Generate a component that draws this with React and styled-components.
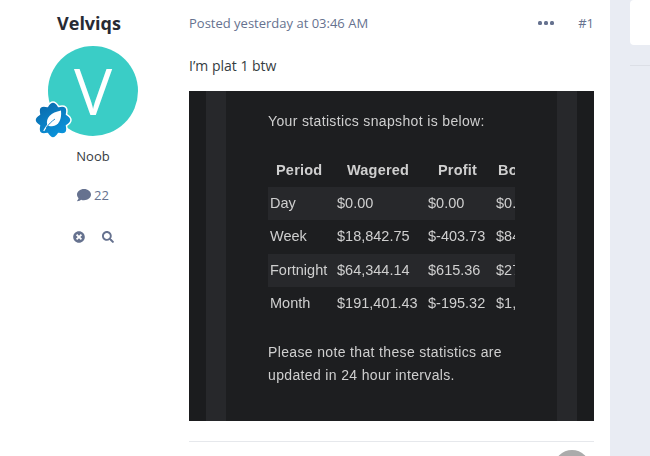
import React from 'react'
import styled, { createGlobalStyle } from 'styled-components'
import { FaComment, FaSearch, FaTimesCircle } from 'react-icons/fa'

const Global = createGlobalStyle`
  html, body {
    margin: 0;
    height: 456px;
    overflow: hidden;
    background: #fff;
    font-family: "Open Sans", "Noto Sans", sans-serif;
  }
`

const Page = styled.div`
  display: flex;
  width: 650px;
  height: 456px;
  overflow: hidden;
`

const Post = styled.section`
  display: flex;
  width: 610px;
  flex: none;
  background: #fff;
`

const Author = styled.aside`
  width: 186px;
  flex: none;
  display: flex;
  flex-direction: column;
  align-items: center;
  padding-top: 12px;
`

const Name = styled.h3`
  margin: 0 8px 0 0;
  font-size: 18px;
  line-height: 22px;
  font-weight: 700;
  color: #272a34;
`

const Avatar = styled.div`
  position: relative;
  width: 90px;
  height: 90px;
  margin-top: 12px;
  border-radius: 50%;
  background: #3acdc6;
  color: #fff;
  font-size: 64px;
  line-height: 90px;
  text-align: center;
`

const Badge = styled.svg`
  position: absolute;
  left: -14px;
  top: 55px;
  width: 38px;
  height: 38px;
`

const Rank = styled.div`
  margin-top: 10px;
  font-size: 13px;
  line-height: 20px;
  color: #353c41;
`

const Count = styled.div`
  display: flex;
  align-items: center;
  gap: 3px;
  margin-top: 19px;
  font-size: 13px;
  line-height: 20px;
  color: #66728f;

  svg {
    width: 14px;
    height: 14px;
  }
`

const Tools = styled.div`
  display: flex;
  align-items: center;
  gap: 17px;
  margin-top: 26px;
  color: #66728f;

  svg {
    width: 12px;
    height: 12px;
    display: block;
  }
`

const Body = styled.div`
  width: 405px;
  padding-left: 3px;
`

const Meta = styled.div`
  display: flex;
  align-items: center;
  height: 20px;
  margin-top: 13px;
  font-size: 13px;
  color: #66728f;
`

const Posted = styled.span`
  flex: 1;
`

const More = styled.span`
  display: flex;
  gap: 1.500px;
  margin: 0 24px 0 0;
`

const Dot = styled.i`
  width: 4.500px;
  height: 4.500px;
  border-radius: 1.500px;
  background: #66728f;
`

const Text = styled.p`
  margin: 22px 0 0;
  font-size: 14px;
  line-height: 22px;
  color: #353c41;
`

const Shot = styled.div`
  box-sizing: border-box;
  height: 330px;
  margin-top: 14px;
  padding: 19px 0 0 79px;
  font-family: "Liberation Sans", Arial, sans-serif;
  color: #cfcfcf;
  background: linear-gradient(
    to right,
    #1b1c1e 17px,
    #27282b 17px,
    #27282b 37px,
    #1d1e20 37px,
    #1d1e20 368px,
    #27282b 368px,
    #27282b 388px,
    #1b1c1e 388px
  );
`

const ShotLine = styled.div`
  font-size: 14px;
  line-height: 23px;
  letter-spacing: 0.35px;
  white-space: nowrap;
  filter: blur(0.3px);
`

const Stats = styled.div`
  display: grid;
  grid-template-columns: 67px 91px 68px 21px;
  width: 247px;
  margin: 21px 0 20px;
  overflow: hidden;
  filter: blur(0.3px);
`

const Head = styled.div`
  height: 33px;
  line-height: 32px;
  font-size: 14.500px;
  font-weight: 700;
  letter-spacing: 0.2px;
  white-space: nowrap;
  overflow: hidden;
  padding-left: ${p => p.$indent}px;
`

const Cell = styled.div`
  height: 33.400px;
  line-height: 33px;
  font-size: 14.500px;
  white-space: nowrap;
  overflow: hidden;
  padding-left: 2px;
  background: ${p => (p.$band ? '#27282b' : 'transparent')};
`

const Footer = styled.div`
  height: 36px;
  margin-top: 20px;
  border-top: 1px solid #e6e8ec;
  display: flex;
  justify-content: flex-end;
  padding: 8px 4px 0 0;
`

const Face = styled.div`
  width: 36px;
  height: 36px;
  flex: none;
  border-radius: 50%;
  background: #ababab;
`

const Side = styled.aside`
  flex: 1;
  background: #e9ecf3;
  padding-left: 20px;
`

const SideCard = styled.div`
  height: 45px;
  background: #fff;
  border-radius: 4px 0 0 4px;
`

const SideRule = styled.div`
  height: 1px;
  margin-top: 20px;
  background: #dcdfe6;
`

const rows = [
  ['Day', '$0.00', '$0.00', '$0.'],
  ['Week', '$18,842.75', '$-403.73', '$84'],
  ['Fortnight', '$64,344.14', '$615.36', '$27'],
  ['Month', '$191,401.43', '$-195.32', '$1,'],
]

const heads = [
  ['Period', 8],
  ['Wagered', 12],
  ['Profit', 12],
  ['Bonus', 4],
]

// eight soft points round the badge centre
const badgePath = () => {
  const at = (deg, r) => {
    const a = ((deg - 90) * Math.PI) / 180
    return [19 + r * Math.cos(a), 19 + r * Math.sin(a)].map(n => n.toFixed(2)).join(' ')
  }
  let d = `M${at(-22.5, 14.6)}`
  for (let i = 0; i < 8; i++) {
    d += `Q${at(i * 45, 22.5)} ${at(i * 45 + 22.5, 14.6)}`
  }
  return d + 'z'
}

const LevelBadge = () => (
  <Badge viewBox="0 0 38 38">
    <defs>
      <linearGradient id="badgeFill" x1="0" y1="0" x2="0.6" y2="1">
        <stop offset="0" stopColor="#0a65a6" />
        <stop offset="1" stopColor="#0a94dc" />
      </linearGradient>
    </defs>
    <path d={badgePath()} fill="url(#badgeFill)" stroke="#fff" strokeWidth="1.500" strokeLinejoin="round" />
    <path d="M27 9.500c.8 8.500-1.800 15-9 15.800-2 .2-3.600-.4-4.800-1.500C11.500 17 17 11.500 27 9.500z" fill="#fff" />
    <path d="M10 29.500c2.500-5 6-8.500 11-11.500" fill="none" stroke="#fff" strokeWidth="1.200" strokeLinecap="round" />
    <path d="M12 27c2.800-4 5.500-6.500 9-9" fill="none" stroke="#1681c4" strokeWidth="0.900" />
  </Badge>
)

export default function App() {
  return (
    <Page>
      <Global />
      <Post>
        <Author>
          <Name>Velviqs</Name>
          <Avatar>
            V
            <LevelBadge />
          </Avatar>
          <Rank>Noob</Rank>
          <Count>
            <FaComment />
            22
          </Count>
          <Tools>
            <FaTimesCircle />
            <FaSearch />
          </Tools>
        </Author>
        <Body>
          <Meta>
            <Posted>Posted yesterday at 03:46 AM</Posted>
            <More>
              <Dot />
              <Dot />
              <Dot />
            </More>
            <span>#1</span>
          </Meta>
          <Text>I’m plat 1 btw</Text>
          <Shot>
            <ShotLine>Your statistics snapshot is below:</ShotLine>
            <Stats>
              {heads.map(([label, indent]) => (
                <Head key={label} $indent={indent}>{label}</Head>
              ))}
              {rows.map((row, i) =>
                row.map(value => (
                  <Cell key={row[0] + value} $band={i % 2 === 0}>{value}</Cell>
                ))
              )}
            </Stats>
            <ShotLine>Please note that these statistics are</ShotLine>
            <ShotLine>updated in 24 hour intervals.</ShotLine>
          </Shot>
          <Footer>
            <Face />
          </Footer>
        </Body>
      </Post>
      <Side>
        <SideCard />
        <SideRule />
      </Side>
    </Page>
  )
}
